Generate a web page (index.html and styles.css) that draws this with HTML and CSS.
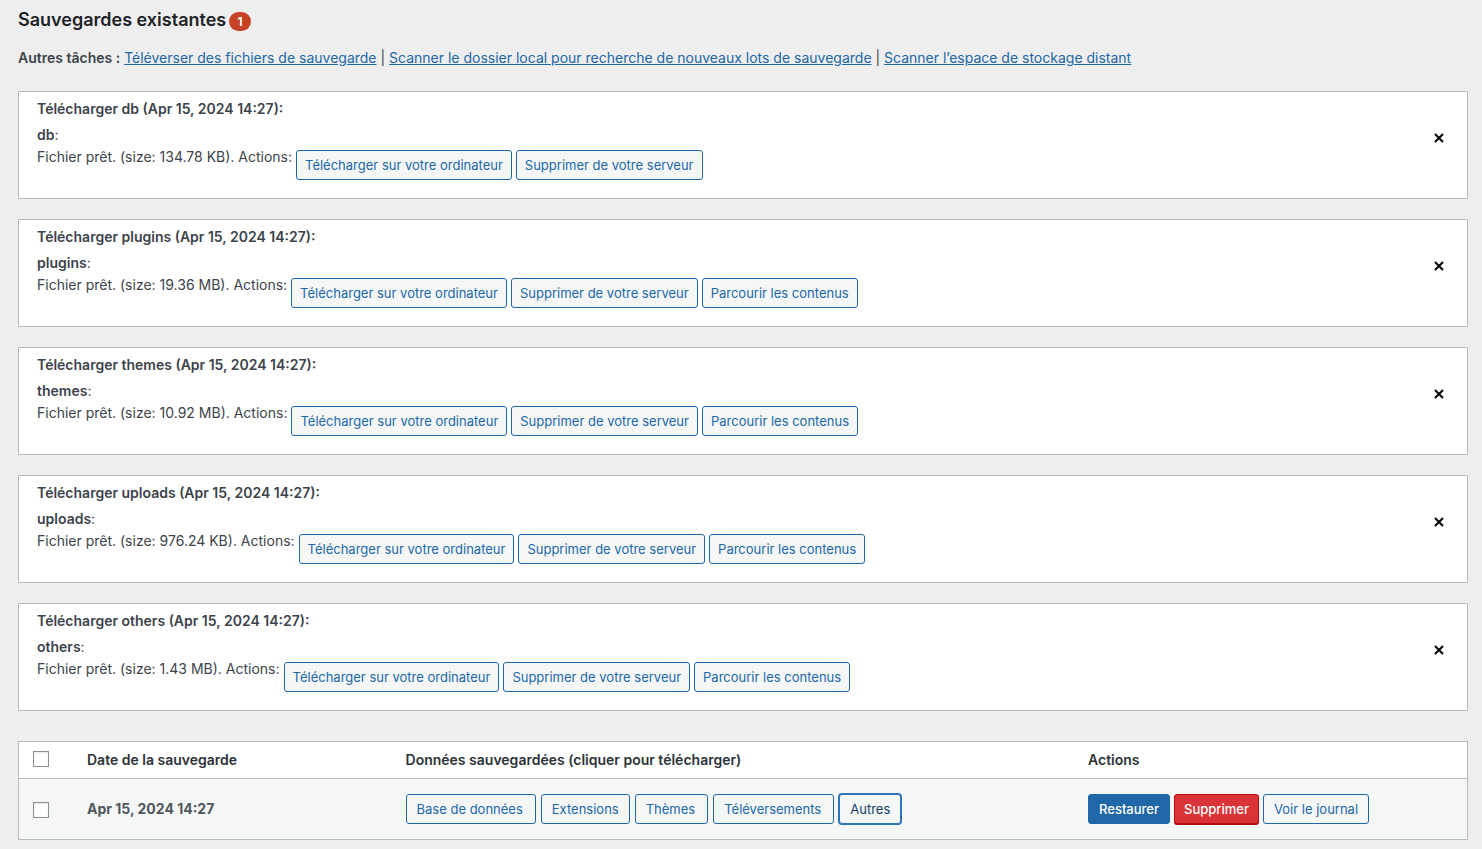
FILE: index.html
```html
<!DOCTYPE html>
<html lang="fr">
<head>
<meta charset="utf-8">
<meta name="viewport" content="width=device-width, initial-scale=1">
<title>Sauvegardes existantes</title>
<link rel="stylesheet" href="styles.css">
</head>
<body>
<main class="page">
  <h1 class="title">Sauvegardes existantes <span class="count">1</span></h1>
  <p class="tasks"><strong>Autres tâches :</strong> <a href="#">Téléverser des fichiers de sauvegarde</a> | <a href="#">Scanner le dossier local pour recherche de nouveaux lots de sauvegarde</a> | <a href="#">Scanner l’espace de stockage distant</a></p>

  <div class="downloads">
    <section class="card">
      <div class="card-body">
        <h2 class="card-title">Télécharger db (Apr 15, 2024 14:27):</h2>
        <div class="entity"><strong>db</strong>:</div>
        <div class="status">
          <span>Fichier prêt. (size: 134.78 KB). Actions:</span>
          <button type="button" class="button">Télécharger sur votre ordinateur</button>
          <button type="button" class="button">Supprimer de votre serveur</button>
        </div>
      </div>
      <button type="button" class="close" aria-label="Fermer"><svg width="10" height="10" viewBox="0 0 10 10"><path d="M1 1L9 9M9 1L1 9"/></svg></button>
    </section>
    <section class="card">
      <div class="card-body">
        <h2 class="card-title">Télécharger plugins (Apr 15, 2024 14:27):</h2>
        <div class="entity"><strong>plugins</strong>:</div>
        <div class="status">
          <span>Fichier prêt. (size: 19.36 MB). Actions:</span>
          <button type="button" class="button">Télécharger sur votre ordinateur</button>
          <button type="button" class="button">Supprimer de votre serveur</button>
          <button type="button" class="button">Parcourir les contenus</button>
        </div>
      </div>
      <button type="button" class="close" aria-label="Fermer"><svg width="10" height="10" viewBox="0 0 10 10"><path d="M1 1L9 9M9 1L1 9"/></svg></button>
    </section>
    <section class="card">
      <div class="card-body">
        <h2 class="card-title">Télécharger themes (Apr 15, 2024 14:27):</h2>
        <div class="entity"><strong>themes</strong>:</div>
        <div class="status">
          <span>Fichier prêt. (size: 10.92 MB). Actions:</span>
          <button type="button" class="button">Télécharger sur votre ordinateur</button>
          <button type="button" class="button">Supprimer de votre serveur</button>
          <button type="button" class="button">Parcourir les contenus</button>
        </div>
      </div>
      <button type="button" class="close" aria-label="Fermer"><svg width="10" height="10" viewBox="0 0 10 10"><path d="M1 1L9 9M9 1L1 9"/></svg></button>
    </section>
    <section class="card">
      <div class="card-body">
        <h2 class="card-title">Télécharger uploads (Apr 15, 2024 14:27):</h2>
        <div class="entity"><strong>uploads</strong>:</div>
        <div class="status">
          <span>Fichier prêt. (size: 976.24 KB). Actions:</span>
          <button type="button" class="button">Télécharger sur votre ordinateur</button>
          <button type="button" class="button">Supprimer de votre serveur</button>
          <button type="button" class="button">Parcourir les contenus</button>
        </div>
      </div>
      <button type="button" class="close" aria-label="Fermer"><svg width="10" height="10" viewBox="0 0 10 10"><path d="M1 1L9 9M9 1L1 9"/></svg></button>
    </section>
    <section class="card">
      <div class="card-body">
        <h2 class="card-title">Télécharger others (Apr 15, 2024 14:27):</h2>
        <div class="entity"><strong>others</strong>:</div>
        <div class="status">
          <span>Fichier prêt. (size: 1.43 MB). Actions:</span>
          <button type="button" class="button">Télécharger sur votre ordinateur</button>
          <button type="button" class="button">Supprimer de votre serveur</button>
          <button type="button" class="button">Parcourir les contenus</button>
        </div>
      </div>
      <button type="button" class="close" aria-label="Fermer"><svg width="10" height="10" viewBox="0 0 10 10"><path d="M1 1L9 9M9 1L1 9"/></svg></button>
    </section>
  </div>

  <table class="backups">
    <colgroup><col class="col-check"><col class="col-date"><col class="col-data"><col class="col-actions"></colgroup>
    <thead>
      <tr>
        <th class="check"><input type="checkbox" class="checkbox" aria-label="Tout sélectionner"></th>
        <th>Date de la sauvegarde</th>
        <th>Données sauvegardées (cliquer pour télécharger)</th>
        <th>Actions</th>
      </tr>
    </thead>
    <tbody>
      <tr>
        <td class="check"><input type="checkbox" class="checkbox" aria-label="Sélectionner Apr 15, 2024 14:27"></td>
        <td class="date">Apr 15, 2024 14:27</td>
        <td>
          <div class="entities">
            <button type="button" class="button wide">Base de données</button>
            <button type="button" class="button">Extensions</button>
            <button type="button" class="button wide">Thèmes</button>
            <button type="button" class="button wide">Téléversements</button>
            <button type="button" class="button focused">Autres</button>
          </div>
        </td>
        <td>
          <div class="actions">
            <button type="button" class="button primary">Restaurer</button>
            <button type="button" class="button danger">Supprimer</button>
            <button type="button" class="button">Voir le journal</button>
          </div>
        </td>
      </tr>
    </tbody>
  </table>
</main>
</body>
</html>
```

FILE: styles.css
```css
* {
  box-sizing: border-box;
}

body {
  margin: 0;
  background: #eeeeee;
  color: #3c434a;
  font-family: Inter, "Liberation Sans", sans-serif;
  font-size: 14px;
  line-height: 22px;
}

.page {
  padding: 8px 14px 9px 18px;
}

.title {
  display: flex;
  align-items: center;
  gap: 3px;
  margin: 0;
  color: #1d2327;
  font-size: 18px;
  font-weight: 600;
  line-height: 24px;
}

.count {
  min-width: 22px;
  margin-top: 2px;
  border-radius: 10px;
  background: #c64225;
  color: #fff;
  font-size: 12px;
  font-weight: 700;
  line-height: 19px;
  text-align: center;
}

.tasks {
  margin: 15px 0 22px;
}

.tasks a {
  color: #2067a8;
}

strong,
th {
  font-weight: 600;
}

.downloads {
  display: flex;
  flex-direction: column;
  gap: 20px;
}

.card {
  display: flex;
  align-items: center;
  justify-content: space-between;
  padding: 8px 18px 18px;
  border: 1px solid #b8bbbe;
  background: #fff;
}

.card-title {
  margin: 0 0 6px;
  font-size: 14px;
  font-weight: 600;
  line-height: 18px;
}

.status {
  display: flex;
  align-items: flex-start;
  gap: 4px;
}

.button {
  height: 30px;
  padding: 0 10px;
  border: 1px solid #2067a8;
  border-radius: 3px;
  background: #f5f7f6;
  color: #2067a8;
  font-family: inherit;
  font-size: 13px;
  line-height: 28px;
  white-space: nowrap;
}

.status .button {
  margin-top: 4px;
  padding: 0 8px;
}

.wide {
  padding-right: 12px;
}

.primary {
  background: #2067a8;
  color: #fff;
  font-weight: 500;
}

.danger {
  padding: 0 9px;
  border-color: #b8090f;
  background: #db3438;
  box-shadow: 0 1px 0 #b8090f;
  color: #fff;
  font-weight: 500;
}

.focused {
  border-color: #2f73bb;
  box-shadow: 0 0 0 1px #2f73bb;
  color: #143e66;
}

.close {
  display: flex;
  margin-bottom: 4px;
  padding: 5px;
  border: 0;
  background: transparent;
}

.close svg {
  fill: none;
  stroke: #000;
  stroke-width: 2;
}

.backups {
  width: 100%;
  margin-top: 30px;
  border: 1px solid #b8bbbe;
  border-collapse: separate;
  border-spacing: 0;
  background: #fff;
  table-layout: fixed;
}

.col-check {
  width: 58px;
}

.col-date {
  width: 22%;
}

.col-actions {
  width: 389px;
}

th,
td {
  padding: 0 10px;
  text-align: left;
  vertical-align: middle;
}

th {
  height: 37px;
  border-bottom: 1px solid #b8bbbe;
  color: #2c3338;
}

td {
  height: 60px;
  background: #f5f7f6;
}

.date {
  color: #50575e;
  font-weight: 700;
}

th.check {
  padding: 0 14px 2px;
}

td.check {
  padding: 2px 14px 0;
}

.checkbox {
  display: block;
  width: 16px;
  height: 16px;
  margin: 0;
  border: 1px solid #8c8f94;
  background: #fff;
  box-shadow: inset 0 1px 2px rgba(0, 0, 0, 0.1);
  appearance: none;
}

.entities {
  display: flex;
  gap: 5px;
}

.actions {
  display: flex;
  gap: 4px;
}
```
